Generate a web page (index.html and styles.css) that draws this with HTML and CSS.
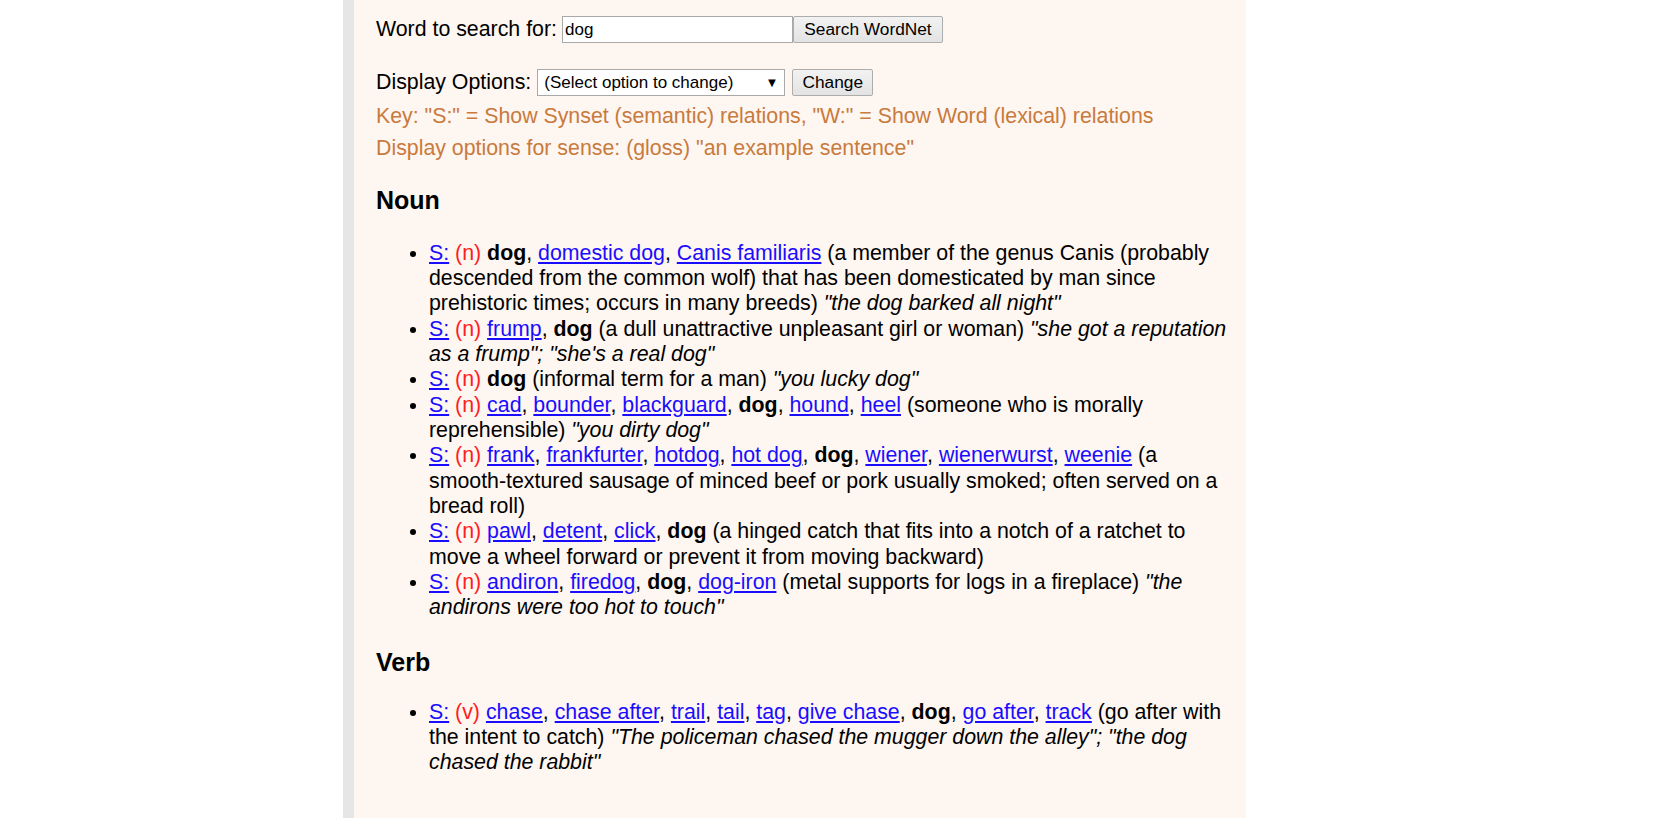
FILE: index.html
```html
<!DOCTYPE html>
<html lang="en">
<head>
<meta charset="utf-8">
<title>WordNet Search - dog</title>
<link rel="stylesheet" href="styles.css">
</head>
<body>
<div class="page">
  <div class="panel">
    <form class="search-form" onsubmit="return false">
      <div class="row row-search">
        <label class="label" for="s">Word to search for:</label>
        <input class="word-input" id="s" type="text" value="dog">
        <button class="btn btn-search" type="button">Search WordNet</button>
      </div>
      <div class="row row-options">
        <label class="label" for="o">Display Options:</label>
        <span class="select-wrap"><select class="opt-select" id="o"><option>(Select option to change)</option></select></span>
        <button class="btn btn-change" type="button">Change</button>
      </div>
      <div class="key key-first">Key: "S:" = Show Synset (semantic) relations, "W:" = Show Word (lexical) relations</div>
      <div class="key key-second">Display options for sense: (gloss) "an example sentence"</div>
    </form>

    <h3 class="pos-heading">Noun</h3>
    <ul class="senses">
      <li><a href="#">S:</a> <span class="pos">(n)</span> <b>dog</b>, <a href="#">domestic dog</a>, <a href="#">Canis familiaris</a> (a member of the genus Canis (probably descended from the common wolf) that has been domesticated by man since prehistoric times; occurs in many breeds) <i>"the dog barked all night"</i></li>
      <li><a href="#">S:</a> <span class="pos">(n)</span> <a href="#">frump</a>, <b>dog</b> (a dull unattractive unpleasant girl or woman) <i>"she got a reputation as a frump"; "she's a real dog"</i></li>
      <li><a href="#">S:</a> <span class="pos">(n)</span> <b>dog</b> (informal term for a man) <i>"you lucky dog"</i></li>
      <li><a href="#">S:</a> <span class="pos">(n)</span> <a href="#">cad</a>, <a href="#">bounder</a>, <a href="#">blackguard</a>, <b>dog</b>, <a href="#">hound</a>, <a href="#">heel</a> (someone who is morally reprehensible) <i>"you dirty dog"</i></li>
      <li><a href="#">S:</a> <span class="pos">(n)</span> <a href="#">frank</a>, <a href="#">frankfurter</a>, <a href="#">hotdog</a>, <a href="#">hot dog</a>, <b>dog</b>, <a href="#">wiener</a>, <a href="#">wienerwurst</a>, <a href="#">weenie</a> (a <span class="nobreak">smooth-textured</span> sausage of minced beef or pork usually smoked; often served on a bread roll)</li>
      <li><a href="#">S:</a> <span class="pos">(n)</span> <a href="#">pawl</a>, <a href="#">detent</a>, <a href="#">click</a>, <b>dog</b> (a hinged catch that fits into a notch of a ratchet to move a wheel forward or prevent it from moving backward)</li>
      <li><a href="#">S:</a> <span class="pos">(n)</span> <a href="#">andiron</a>, <a href="#">firedog</a>, <b>dog</b>, <a href="#"><span class="nobreak">dog-iron</span></a> (metal supports for logs in a fireplace) <i>"the andirons were too hot to touch"</i></li>
    </ul>

    <h3 class="pos-heading">Verb</h3>
    <ul class="senses senses-verb">
      <li><a href="#">S:</a> <span class="pos">(v)</span> <a href="#">chase</a>, <a href="#">chase after</a>, <a href="#">trail</a>, <a href="#">tail</a>, <a href="#">tag</a>, <a href="#">give chase</a>, <b>dog</b>, <a href="#">go after</a>, <a href="#">track</a> (go after with the intent to catch) <i>"The policeman chased the mugger down the alley"; "the dog chased the rabbit"</i></li>
    </ul>
  </div>
</div>
</body>
</html>
```

FILE: styles.css
```css
html, body {
  margin: 0;
  padding: 0;
  background: #ffffff;
}

body {
  font-family: "Liberation Sans", Arial, sans-serif;
  font-size: 21.33px;
  line-height: 25.33px;
  color: #000000;
}

.page {
  display: flex;
  min-height: 100vh;
  padding-left: 343px;
}

.panel {
  width: 857px;
  border-left: 11px solid #e6e6e6;
  background: #fef6f0;
  padding: 0 13px 40px 22px;
}

.search-form {
  display: flex;
  flex-direction: column;
  padding-top: 16px;
}

.row {
  display: flex;
  align-items: center;
  height: 27px;
}

.row-options {
  margin-top: 26px;
}

.label {
  margin-right: 5px;
}

.row-options .label {
  margin-right: 6px;
}

.word-input {
  box-sizing: border-box;
  width: 231px;
  height: 27px;
  margin: 0;
  padding: 0 2px;
  border: 1px solid #a9a9a9;
  background: #ffffff;
  font-family: "Liberation Sans", Arial, sans-serif;
  font-size: 17px;
  color: #000000;
  outline: none;
}

.btn {
  box-sizing: border-box;
  height: 27px;
  margin: 0;
  padding: 0 8px;
  border: 1px solid #adadad;
  border-radius: 2px;
  background: linear-gradient(#f2f2f2, #e3e3e3);
  font-family: "Liberation Sans", Arial, sans-serif;
  font-size: 17.3px;
  color: #000000;
}

.btn-search {
  width: 150px;
}

.select-wrap {
  position: relative;
  display: inline-block;
}

.select-wrap::after {
  content: "\25BC";
  position: absolute;
  right: 7px;
  top: 6px;
  font-size: 13px;
  line-height: 15px;
  color: #000000;
  pointer-events: none;
}

.opt-select {
  box-sizing: border-box;
  appearance: none;
  -webkit-appearance: none;
  width: 248px;
  height: 27px;
  margin: 0;
  padding: 0 4px 0 6px;
  border: 1px solid #a9a9a9;
  border-radius: 0;
  background: #ffffff;
  font-family: "Liberation Sans", Arial, sans-serif;
  font-size: 17px;
  color: #000000;
}

.btn-change {
  width: 81px;
  margin-left: 7px;
}

.key {
  color: #c97a3d;
}

.key-first {
  margin-top: 8px;
}

.key-second {
  margin-top: 7px;
}

.pos-heading {
  margin: 24px 0 0 0;
  font-size: 25px;
  line-height: 29px;
  font-weight: bold;
}

.senses {
  margin: 26px 0 0 0;
  padding-left: 53px;
}

.senses-verb {
  margin-top: 23px;
}

.senses li {
  margin: 0;
}

.senses a {
  color: #1a0dff;
  text-decoration: underline;
}

.senses .pos {
  color: #ff2020;
}

.nobreak {
  white-space: nowrap;
}

.senses + .pos-heading {
  margin-top: 27px;
}
```
